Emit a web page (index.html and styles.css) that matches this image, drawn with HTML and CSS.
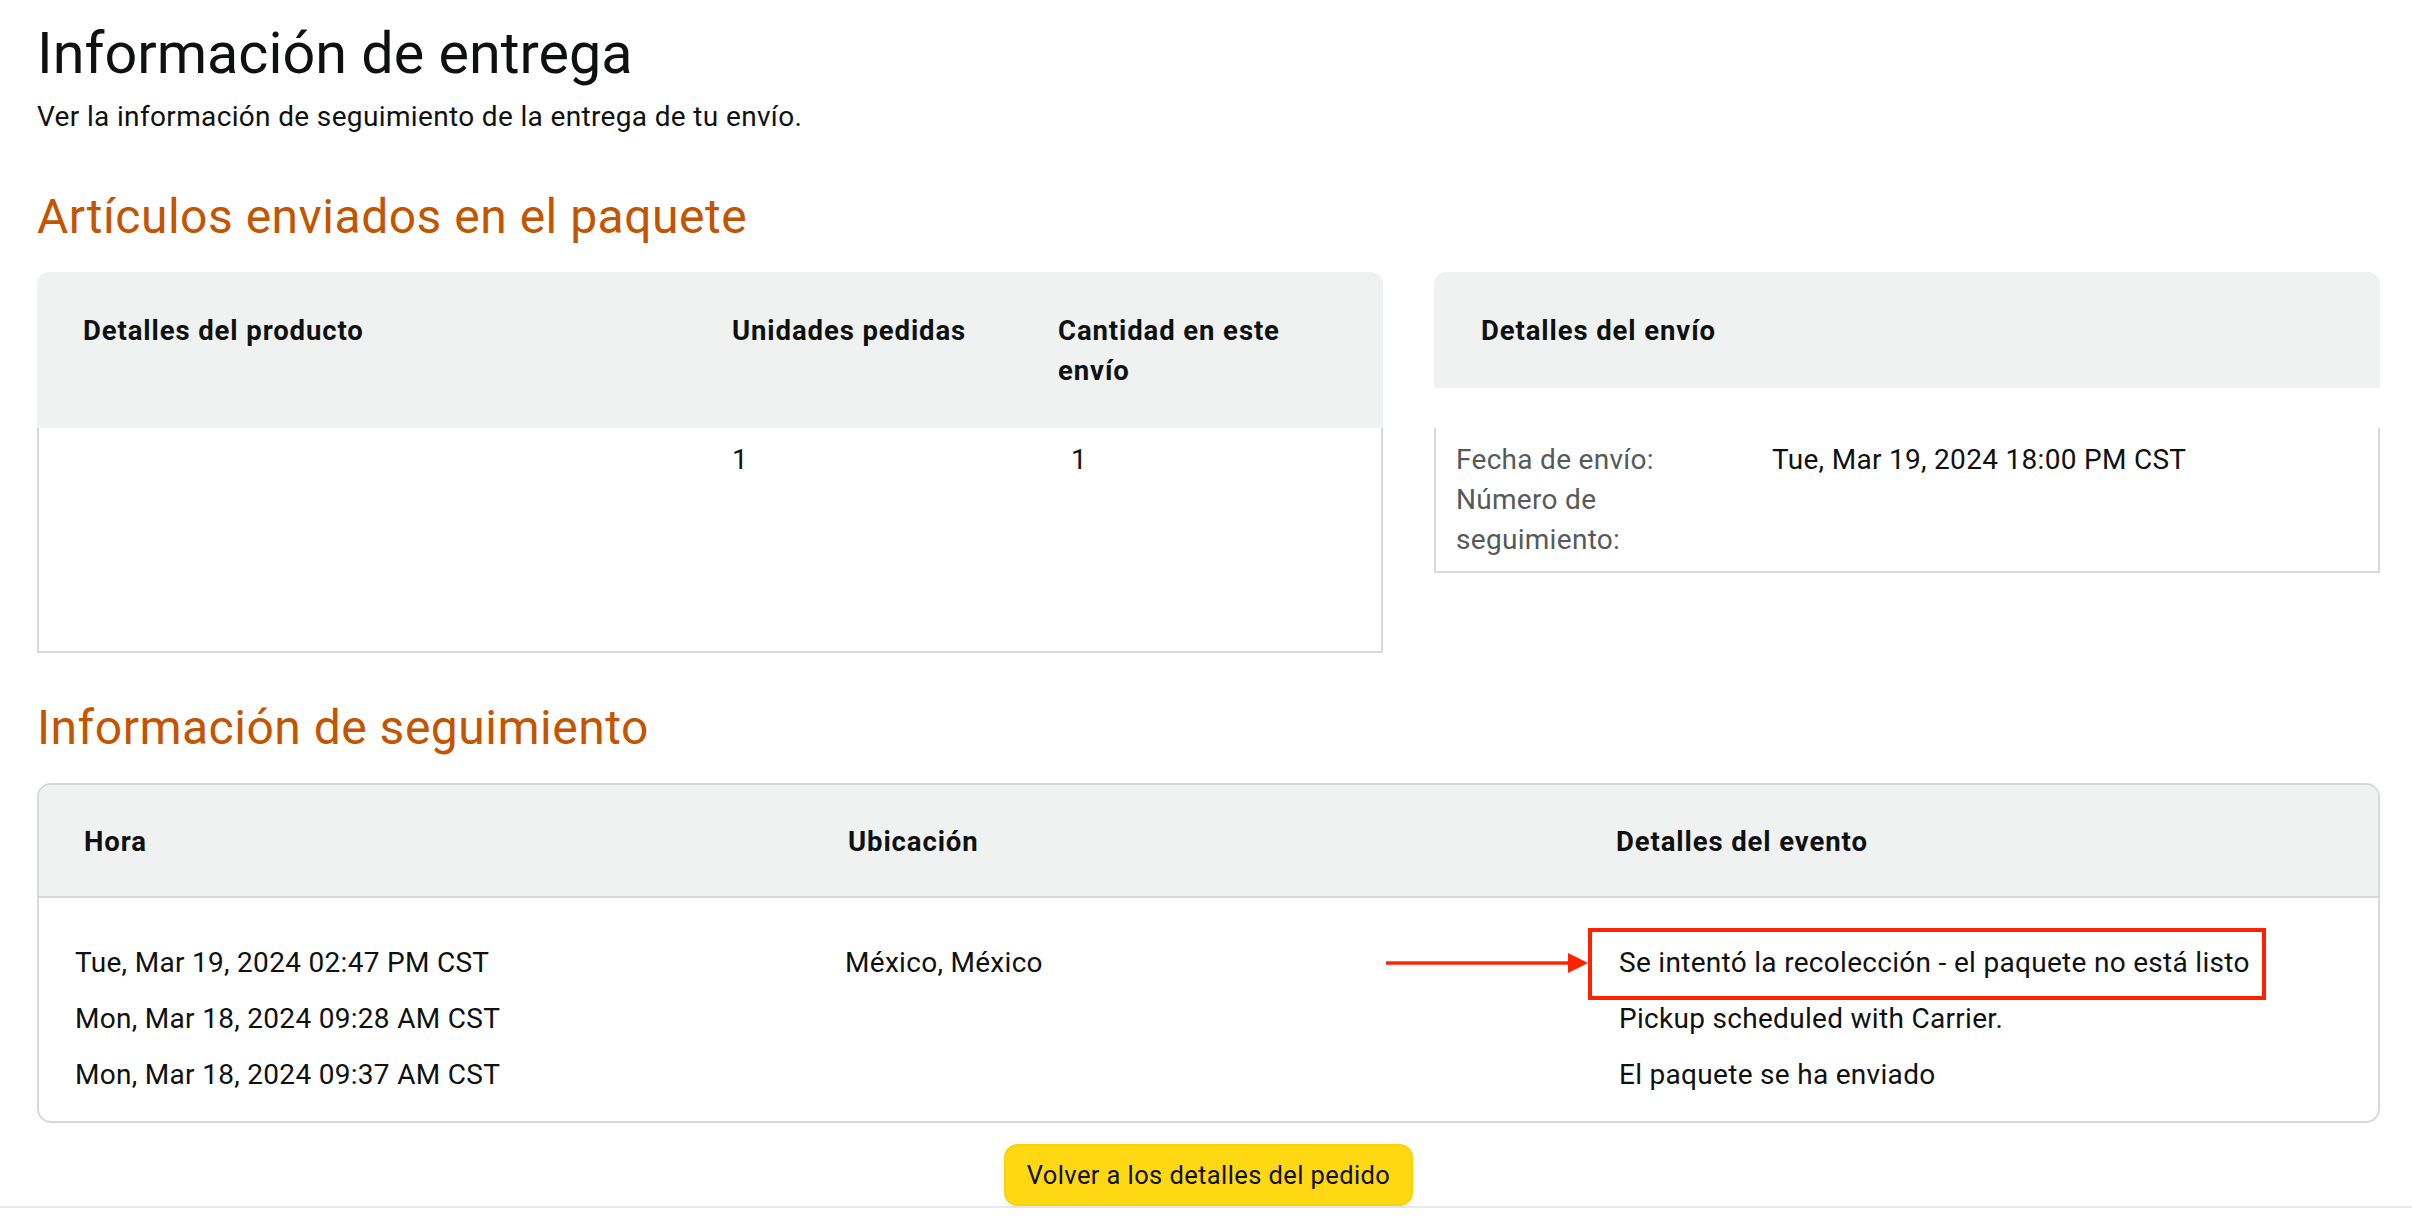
FILE: index.html
```html
<!DOCTYPE html>
<html lang="es">
<head>
<meta charset="utf-8">
<title>Información de entrega</title>
<link rel="stylesheet" href="styles.css">
</head>
<body>
<main class="page">
  <h1 class="title">Información de entrega</h1>
  <p class="subtitle">Ver la información de seguimiento de la entrega de tu envío.</p>

  <h2 class="section-title">Artículos enviados en el paquete</h2>
  <div class="shipment-row">
    <section class="card items-card">
      <div class="card-head items-grid items-head">
        <div>Detalles del producto</div>
        <div>Unidades pedidas</div>
        <div>Cantidad en este envío</div>
      </div>
      <div class="card-body items-grid items-body">
        <div></div>
        <div>1</div>
        <div class="qty">1</div>
      </div>
    </section>

    <section class="card ship-card">
      <div class="card-head ship-head">Detalles del envío</div>
      <div class="card-body ship-body">
        <div class="label">Fecha de envío:</div>
        <div class="value">Tue, Mar 19, 2024 18:00 PM CST</div>
        <div class="label">Número de seguimiento:</div>
        <div class="value"></div>
      </div>
    </section>
  </div>

  <h2 class="section-title track-title">Información de seguimiento</h2>
  <section class="track-table">
    <div class="track-head track-grid-head">
      <div>Hora</div>
      <div>Ubicación</div>
      <div>Detalles del evento</div>
    </div>
    <div class="track-body">
      <div class="track-row">
        <div>Tue, Mar 19, 2024 02:47 PM CST</div>
        <div>México, México</div>
        <div class="event highlighted">
          <svg class="arrow" width="202" height="20" viewBox="0 0 202 20" aria-hidden="true">
            <rect x="0" y="8.3" width="184" height="3.4" fill="#ff2200"/>
            <polygon points="182,0 202,10 182,20" fill="#ff2200"/>
          </svg>
          <span class="mark-box"></span>
          Se intentó la recolección - el paquete no está listo
        </div>
      </div>
      <div class="track-row">
        <div>Mon, Mar 18, 2024 09:28 AM CST</div>
        <div></div>
        <div class="event">Pickup scheduled with Carrier.</div>
      </div>
      <div class="track-row">
        <div>Mon, Mar 18, 2024 09:37 AM CST</div>
        <div></div>
        <div class="event">El paquete se ha enviado</div>
      </div>
    </div>
  </section>

  <div class="actions">
    <a class="btn" href="#">Volver a los detalles del pedido</a>
  </div>
</main>
<div class="divider"></div>
</body>
</html>
```

FILE: styles.css
```css
* { box-sizing: border-box; }

body {
  margin: 0;
  font-family: Roboto, "Liberation Sans", sans-serif;
  color: #0f1111;
  background: #ffffff;
}

.page {
  padding: 0 32px 0 37px;
}

.title {
  margin: 20px 0 0;
  font-size: 57.5px;
  line-height: 68px;
  font-weight: 400;
}

.subtitle {
  margin: 9px 0 0;
  font-size: 28px;
  line-height: 40px;
  letter-spacing: 0.35px;
}

.section-title {
  margin: 52px 0 0;
  font-size: 48px;
  line-height: 56px;
  font-weight: 400;
  letter-spacing: 0.5px;
  color: #c45500;
}

.shipment-row {
  display: flex;
  align-items: flex-start;
  gap: 51px;
  margin-top: 27px;
}

.card-head {
  background: #f0f2f2;
  border-radius: 12px 12px 0 0;
  padding: 39px 0 37px;
  font-weight: 700;
  font-size: 27.5px;
  line-height: 40px;
  letter-spacing: 0.9px;
}

.card-body {
  border: 2px solid #d5d9d9;
  border-top: none;
  font-size: 28px;
  line-height: 40px;
  letter-spacing: 0.3px;
}

.items-card {
  width: 1346px;
  flex: none;
}

.items-grid {
  display: grid;
  grid-template-columns: 649px 326px 270px;
}

.items-head {
  padding-left: 46px;
}

.items-body {
  height: 225px;
  padding: 12px 0 0 44px;
}

.qty {
  padding-left: 13px;
}

.ship-card {
  flex: 1;
}

.ship-head {
  padding-left: 47px;
}

.ship-body {
  margin-top: 40px;
  display: grid;
  grid-template-columns: 230px 1fr;
  column-gap: 86px;
  padding: 12px 20px 11px;
}

.label {
  color: #565959;
}

.track-title {
  margin-top: 47px;
}

.track-table {
  margin-top: 27px;
  border: 2px solid #d5d9d9;
  border-radius: 14px;
  overflow: hidden;
}

.track-head {
  display: grid;
  grid-template-columns: 764px 768px 1fr;
  background: #f0f2f2;
  border-bottom: 2px solid #d5d9d9;
  padding: 37px 0 34px 45px;
  font-weight: 700;
  font-size: 27.5px;
  line-height: 40px;
  letter-spacing: 0.9px;
}

.track-body {
  padding: 37px 0 18px 36px;
  font-size: 28px;
  line-height: 56px;
  letter-spacing: 0.3px;
}

.track-row {
  display: grid;
  grid-template-columns: 770px 774px 1fr;
  height: 56px;
}

.event {
  position: relative;
}

.mark-box {
  position: absolute;
  left: -31px;
  top: -7px;
  width: 678px;
  height: 72px;
  border: 4px solid #ff2200;
}

.arrow {
  position: absolute;
  left: -233px;
  top: 18px;
}

.actions {
  margin-top: 21px;
  height: 62px;
  display: flex;
  justify-content: center;
}

.btn {
  display: inline-block;
  height: 62px;
  padding: 0 21px;
  background: #ffd814;
  border: 2px solid #fcd200;
  border-radius: 14px;
  box-shadow: 0 2px 5px rgba(213, 217, 217, 0.5);
  color: #0f1111;
  text-decoration: none;
  font-size: 25.5px;
  line-height: 58px;
  letter-spacing: 0.4px;
}

.divider {
  border-top: 2px solid #e7e9ec;
}
```
